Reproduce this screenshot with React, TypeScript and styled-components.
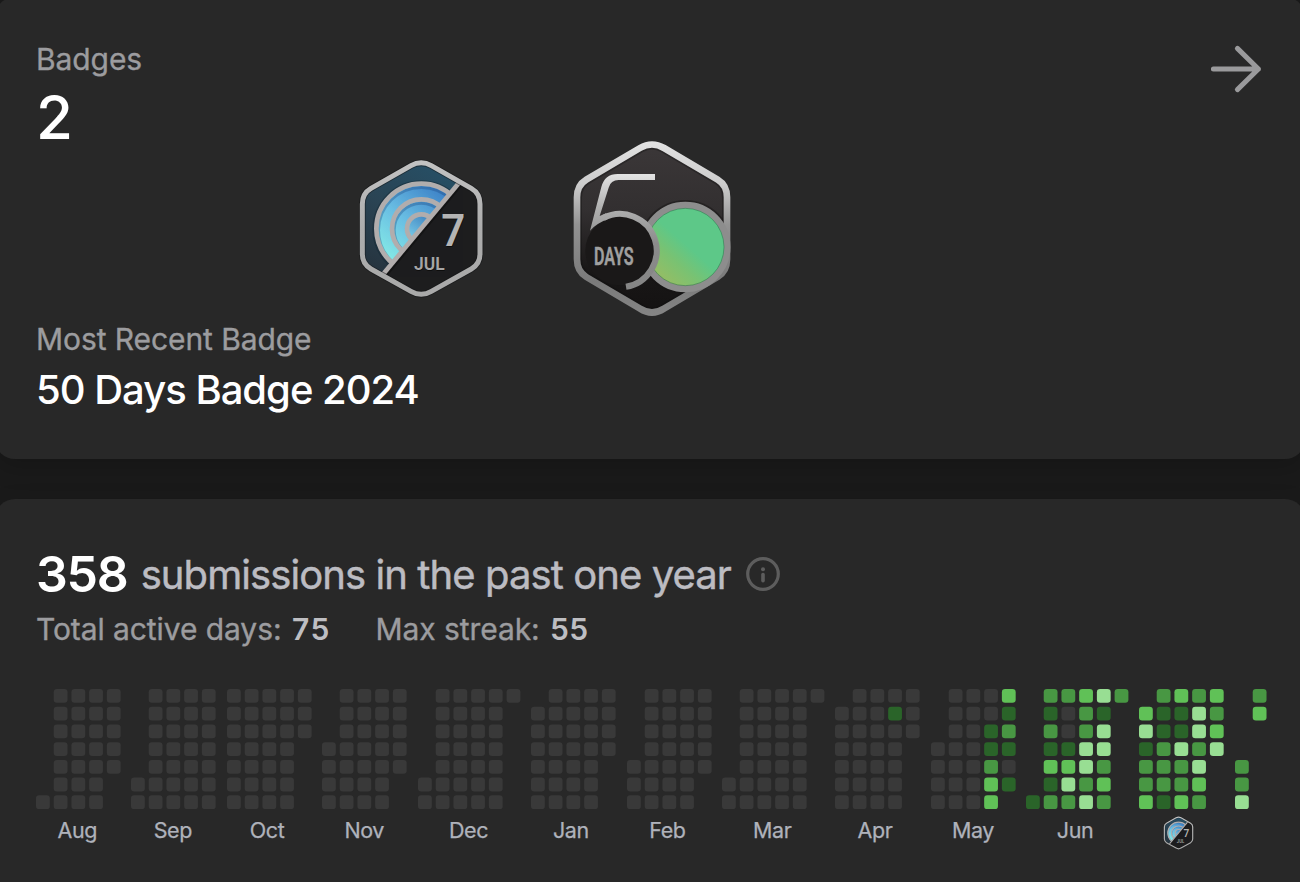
import React from "react";
import styled, { createGlobalStyle } from "styled-components";

const GlobalStyle = createGlobalStyle`
  * { box-sizing: border-box; }
  body {
    margin: 0;
    background: #1a1a1a;
    font-family: Inter, "Liberation Sans", sans-serif;
    color: #fff;
  }
`;

const Page = styled.main`
  display: flex;
  flex-direction: column;
  gap: 40px;
  height: 882px;
  overflow: hidden;
`;

const Card = styled.section`
  flex: none;
  margin: 0 -5px;
  padding: 0 43px 0 41px;
  border-radius: 20px;
  background: #282828;
  box-shadow: 0 8px 24px rgba(0, 0, 0, 0.18);
`;

const BadgesCard = styled(Card)`
  margin-top: -3px;
  height: 462px;
  padding-top: 42px;
`;

const ActivityCard = styled(Card)`
  height: 420px;
  padding-top: 50px;
`;

const BadgesHeader = styled.header`
  display: flex;
  justify-content: space-between;
  height: 99px;
`;

const Caption = styled.div`
  font-size: 30px;
  line-height: 40px;
  letter-spacing: -0.08px;
  color: #9c9c9f;
  -webkit-text-stroke: 0.35px #9c9c9f;
`;

const BadgeCount = styled.div`
  font-size: 60px;
  font-weight: 500;
  line-height: 60px;
  margin-top: 8px;
`;

const ArrowIcon = styled.svg`
  width: 52px;
  height: 50px;
  margin-top: 5px;
`;

const BadgeShelf = styled.div`
  display: flex;
  align-items: center;
  gap: 85px;
  height: 181px;
  padding-left: 321px;
`;

const BadgeArt = styled.svg<{ $width: number; $height: number }>`
  display: block;
  flex: none;
  width: ${(p) => p.$width}px;
  height: ${(p) => p.$height}px;
`;

const BadgeName = styled.div`
  margin-top: 6px;
  font-size: 40px;
  font-weight: 500;
  line-height: 50px;
  letter-spacing: -1px;
`;

const Headline = styled.div`
  display: flex;
  align-items: center;
  height: 50px;
  line-height: 50px;
  white-space: nowrap;
`;

const SubmissionCount = styled.span`
  margin-right: 13px;
  font-size: 50px;
  font-weight: 600;
  letter-spacing: -1.2px;
  color: #fff;
`;

const HeadlineText = styled.span`
  padding-top: 2px;
  font-size: 40px;
  letter-spacing: -0.92px;
  color: #bcbcc2;
  -webkit-text-stroke: 0.45px #bcbcc2;
`;

const InfoIcon = styled.svg`
  width: 34px;
  height: 34px;
  margin-left: 15px;
`;

const Stats = styled.div`
  display: flex;
  gap: 44.5px;
  margin-top: 10px;
`;

const Stat = styled.div`
  display: flex;
  gap: 10.5px;
`;

const StatValue = styled.span<{ $spacing: number }>`
  font-size: 30px;
  font-weight: 600;
  line-height: 40px;
  letter-spacing: ${(p) => p.$spacing}px;
  color: #bebec2;
`;

const Heatmap = styled.div`
  display: flex;
  gap: 10.8px;
  margin-top: 40px;
`;

const Month = styled.div`
  display: flex;
  flex-direction: column;
  align-items: center;
  flex: none;
`;

const MonthGrid = styled.svg`
  display: block;
  height: 121px;
  overflow: visible;
`;

const MonthLabel = styled.div<{ $trim: number }>`
  margin-top: 8px;
  padding-right: ${(p) => p.$trim}px;
  height: 24px;
  font-size: 21.5px;
  line-height: 24px;
  letter-spacing: -0.4px;
  color: #afb2bb;
  -webkit-text-stroke: 0.25px #afb2bb;
`;

const MonthBadge = styled.div`
  margin-top: 6px;
  padding-right: 7px;
`;

const CELL = 13.8;
const PITCH = 17.72;

const LEVELS: Record<string, string> = {
  "0": "#393939",
  "1": "#2a6429",
  "2": "#489743",
  "3": "#60c157",
  "4": "#98de93",
};

// One string per week, Sunday to Saturday; "." is a day outside the month.
const MONTHS: { label: string; trim: number; weeks: string[] }[] = [
  { label: "Aug", trim: 2, weeks: ["......0", "0000000", "0000000", "0000000", "00000.."] },
  { label: "Sep", trim: 2, weeks: [".....00", "0000000", "0000000", "0000000", "0000000"] },
  { label: "Oct", trim: 4.5, weeks: ["0000000", "0000000", "0000000", "0000000", "000...."] },
  { label: "Nov", trim: 1, weeks: ["...0000", "0000000", "0000000", "0000000", "00000.."] },
  { label: "Dec", trim: 1, weeks: [".....00", "0000000", "0000000", "0000000", "0000000", "0......"] },
  { label: "Jan", trim: 5, weeks: [".000000", "0000000", "0000000", "0000000", "0000..."] },
  { label: "Feb", trim: 3, weeks: ["....000", "0000000", "0000000", "0000000", "00000.."] },
  { label: "Mar", trim: 2, weeks: [".....00", "0000000", "0000000", "0000000", "0000000", "0......"] },
  { label: "Apr", trim: 5, weeks: [".000000", "0000000", "0000000", "0100000", "000...."] },
  { label: "May", trim: 0, weeks: ["...0000", "0000000", "0000000", "0011233", "312101."] },
  { label: "Jun", trim: 4.5, weeks: ["......1", "2121312", "2001342", "3224424", "4144232", "2......"] },
  { label: "Jul", trim: 0, weeks: [".341223", "2112221", "3114223", "2442432", "3234..."] },
  { label: "", trim: 0, weeks: ["....224", "23....."] },
];

function JulyBadge({ id, width, height }: { id: string; width: number; height: number }) {
  const hex =
    "M66 222Q66 190 92 175L212 107Q242.5 90 273 107L393 175Q419 190 419 222V372Q419 402 393 417L273 484Q242.5 502 212 484L92 417Q66 402 66 372Z";
  return (
    <BadgeArt $width={width} $height={height} viewBox="50 84 384 424">
      <defs>
        <linearGradient id={`${id}-night`} x1="0.2" y1="1" x2="0.7" y2="0">
          <stop offset="0" stopColor="#25303a" />
          <stop offset="0.55" stopColor="#2a4454" />
          <stop offset="1" stopColor="#265067" />
        </linearGradient>
        <linearGradient id={`${id}-sky`} gradientUnits="userSpaceOnUse" x1="125" y1="380" x2="290" y2="175">
          <stop offset="0" stopColor="#86ece6" />
          <stop offset="0.5" stopColor="#69bde3" />
          <stop offset="1" stopColor="#3f84c8" />
        </linearGradient>
        <linearGradient id={`${id}-core`} gradientUnits="userSpaceOnUse" x1="195" y1="325" x2="265" y2="225">
          <stop offset="0" stopColor="#7fd2ec" />
          <stop offset="1" stopColor="#2f6fb4" />
        </linearGradient>
        <linearGradient id={`${id}-metal`} x1="0" y1="0" x2="0" y2="1">
          <stop offset="0" stopColor="#c2c2c2" />
          <stop offset="0.5" stopColor="#adadad" />
          <stop offset="1" stopColor="#a9a9a9" />
        </linearGradient>
        <clipPath id={`${id}-half`}>
          <path d="M356 160L133 428L50 428V84H356Z" />
        </clipPath>
        <clipPath id={`${id}-hex`}>
          <path d={hex} />
        </clipPath>
      </defs>
      <path d={hex} fill="#1d1d1e" />
      <g clipPath={`url(#${id}-half)`}>
        <path d={hex} fill={`url(#${id}-night)`} />
        <circle cx="243" cy="298" r="141" fill="none" stroke="#152936" strokeWidth="12" opacity="0.5" />
        <circle cx="243" cy="296" r="135" fill={`url(#${id}-sky)`} />
        <circle cx="243" cy="301" r="128" fill="none" stroke="#1d4780" strokeWidth="8" opacity="0.35" />
        <circle cx="243" cy="296" r="135" fill="none" stroke="#b1adad" strokeWidth="14" />
        <circle cx="243" cy="301" r="81" fill="none" stroke="#1d4780" strokeWidth="8" opacity="0.35" />
        <circle cx="243" cy="296" r="88" fill="none" stroke="#b1adad" strokeWidth="14" />
        <circle cx="243" cy="296" r="43" fill={`url(#${id}-core)`} stroke="#b1adad" strokeWidth="14" />
      </g>
      <g clipPath={`url(#${id}-hex)`}>
        <path d="M359 163L136 432" stroke="#111" strokeWidth="16" opacity="0.7" />
        <path d="M360 154L127 434" stroke="#b1adad" strokeWidth="14" />
      </g>
      <path d={hex} fill="none" stroke="#121416" strokeWidth="20" opacity="0.55" />
      <path d={hex} fill="none" stroke={`url(#${id}-metal)`} strokeWidth="15" />
      <g fontFamily="Roboto, sans-serif" fontWeight="600" letterSpacing="0">
        <text x="304" y="352" fontSize="134" textLength="72" lengthAdjust="spacingAndGlyphs" fill="#0d0d0d">7</text>
        <text x="303" y="348" fontSize="134" textLength="72" lengthAdjust="spacingAndGlyphs" fill="#b4b4b4">7</text>
        <text x="222" y="422" fontSize="57" textLength="92" lengthAdjust="spacingAndGlyphs" fill="#0d0d0d">JUL</text>
        <text x="221" y="419" fontSize="57" textLength="92" lengthAdjust="spacingAndGlyphs" fill="#a6a6a6">JUL</text>
      </g>
    </BadgeArt>
  );
}

function FiftyDaysBadge() {
  const hex =
    "M51 202Q51 166 79 149L240 54Q276 33 312 54L473 149Q501 166 501 202V388Q501 424 473 441L312 536Q276 559 240 536L79 441Q51 424 51 388Z";
  return (
    <BadgeArt $width={164} $height={181} viewBox="30 24 492 543">
      <defs>
        <linearGradient id="fifty-metal" gradientUnits="userSpaceOnUse" x1="0" y1="33" x2="0" y2="558">
          <stop offset="0" stopColor="#e2e2e2" />
          <stop offset="0.25" stopColor="#cccccc" />
          <stop offset="0.48" stopColor="#929292" />
          <stop offset="0.8" stopColor="#7a7a7a" />
          <stop offset="1" stopColor="#858585" />
        </linearGradient>
        <linearGradient id="fifty-body" x1="0" y1="0" x2="0" y2="1">
          <stop offset="0" stopColor="#3b3738" />
          <stop offset="0.4" stopColor="#322f30" />
          <stop offset="0.75" stopColor="#191717" />
          <stop offset="1" stopColor="#141212" />
        </linearGradient>
        <linearGradient id="fifty-five" gradientUnits="userSpaceOnUse" x1="0" y1="130" x2="0" y2="480">
          <stop offset="0" stopColor="#e4e4e4" />
          <stop offset="0.3" stopColor="#b0b0b0" />
          <stop offset="0.6" stopColor="#8b8b8b" />
          <stop offset="1" stopColor="#858585" />
        </linearGradient>
        <linearGradient id="fifty-green" gradientUnits="userSpaceOnUse" x1="295" y1="425" x2="372" y2="338">
          <stop offset="0" stopColor="#91be66" />
          <stop offset="0.5" stopColor="#79c272" />
          <stop offset="1" stopColor="#5dc888" />
        </linearGradient>
        <clipPath id="fifty-hex">
          <path d={hex} />
        </clipPath>
      </defs>
      <path d={hex} fill="url(#fifty-body)" />
      <g clipPath="url(#fifty-hex)">
        <circle cx="376" cy="351" r="141" fill="#161414" opacity="0.5" />
        <path d={hex} fill="none" stroke="#0f0e0e" strokeWidth="30" opacity="0.35" />
      </g>
      <path d={hex} fill="none" stroke="url(#fifty-metal)" strokeWidth="20" />
      <circle cx="376" cy="351" r="126" fill="url(#fifty-green)" stroke="#8d8d8d" strokeWidth="19" />
      <circle cx="376" cy="351" r="116" fill="none" stroke="#2c6b48" strokeWidth="3" opacity="0.5" />
      <circle cx="180" cy="362" r="104" fill="#1a1818" />
      <path d="M130 264A110 110 0 1 1 198 470.5" fill="none" stroke="url(#fifty-five)" strokeWidth="18" />
      <path
        d="M90 302L124 171Q134 132 173 132H285V150H176Q152 150 146 173L119 258L138 250L142 268Q110 280 90 302Z"
        fill="url(#fifty-five)"
      />
      <text
        x="102"
        y="404"
        fontFamily="Roboto, sans-serif"
        fontWeight="600"
        fontSize="79"
        textLength="119"
        lengthAdjust="spacingAndGlyphs"
        fill="#a0a0a0"
        stroke="#a0a0a0"
        strokeWidth="1.5"
      >
        DAYS
      </text>
    </BadgeArt>
  );
}

function MonthCells({ weeks }: { weeks: string[] }) {
  const width = (weeks.length - 1) * PITCH + CELL;
  return (
    <MonthGrid width={width}>
      {weeks.map((week, w) =>
        week.split("").map((level, d) =>
          level === "." ? null : (
            <rect
              key={`${w}-${d}`}
              x={w * PITCH}
              y={d * PITCH}
              width={CELL}
              height={CELL}
              rx={3.2}
              fill={LEVELS[level]}
            />
          )
        )
      )}
    </MonthGrid>
  );
}

export default function App() {
  return (
    <>
      <GlobalStyle />
      <Page>
        <BadgesCard>
          <BadgesHeader>
            <div>
              <Caption>Badges</Caption>
              <BadgeCount>2</BadgeCount>
            </div>
            <ArrowIcon viewBox="0 0 52 50" fill="none" stroke="#9a9a9c" strokeWidth="5" strokeLinecap="round" strokeLinejoin="round">
              <path d="M3.4 25H48.4M27.4 4.4L48.4 25L27.4 45.6" />
            </ArrowIcon>
          </BadgesHeader>
          <BadgeShelf>
            <JulyBadge id="july-large" width={128} height={141.33} />
            <FiftyDaysBadge />
          </BadgeShelf>
          <Caption>Most Recent Badge</Caption>
          <BadgeName>50 Days Badge 2024</BadgeName>
        </BadgesCard>

        <ActivityCard>
          <Headline>
            <SubmissionCount>358</SubmissionCount>
            <HeadlineText>submissions in the past one year</HeadlineText>
            <InfoIcon viewBox="0 0 34 34">
              <circle cx="17" cy="17" r="15.3" fill="none" stroke="#5d5d5d" strokeWidth="3.2" />
              <circle cx="17" cy="12.2" r="2" fill="#5d5d5d" />
              <rect x="15.2" y="15.8" width="3.6" height="9.6" rx="1.7" fill="#5d5d5d" />
            </InfoIcon>
          </Headline>
          <Stats>
            <Stat>
              <Caption>Total active days:</Caption>
              <StatValue $spacing={1.6}>75</StatValue>
            </Stat>
            <Stat>
              <Caption>Max streak:</Caption>
              <StatValue $spacing={0.2}>55</StatValue>
            </Stat>
          </Stats>
          <Heatmap>
            {MONTHS.map((m, i) => (
              <Month key={i}>
                <MonthCells weeks={m.weeks} />
                {m.label === "Jul" ? (
                  <MonthBadge>
                    <JulyBadge id="july-small" width={31} height={34} />
                  </MonthBadge>
                ) : (
                  <MonthLabel $trim={m.trim}>{m.label}</MonthLabel>
                )}
              </Month>
            ))}
          </Heatmap>
        </ActivityCard>
      </Page>
    </>
  );
}
